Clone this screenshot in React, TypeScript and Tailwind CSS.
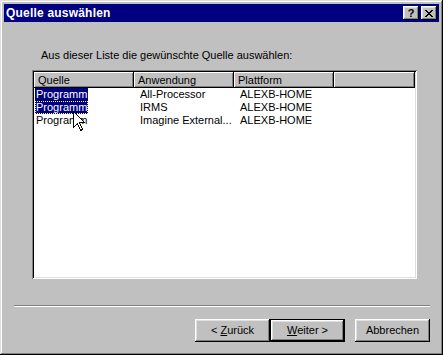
import React from "react";

const raised =
  "shadow-[inset_-1px_-1px_#000,inset_1px_1px_#fff,inset_-2px_-2px_#808080,inset_2px_2px_#dfdfdf]";

function Btn({ children, def }: { children: React.ReactNode; def?: boolean }) {
  if (def) {
    return (
      <div className="w-[75px] h-[23px] border border-black">
        <div className={`w-full h-full flex items-center justify-center ${raised}`}>{children}</div>
      </div>
    );
  }
  return (
    <div className={`w-[75px] h-[23px] flex items-center justify-center ${raised}`}>{children}</div>
  );
}

function HeaderCell({ w, children }: { w: string; children?: React.ReactNode }) {
  return (
    <div
      className={`${w} h-full flex items-center pl-[4px] shadow-[inset_-1px_-1px_#000,inset_1px_1px_#fff,inset_-2px_-2px_#808080]`}
    >
      {children}
    </div>
  );
}

const rows = [
  { app: "All-Processor", sel: true, focus: false },
  { app: "IRMS", sel: true, focus: true },
  { app: "Imagine External...", sel: false, focus: false },
];

export default function App() {
  return (
    <div
      className={`relative w-[443px] h-[355px] bg-[#c0c0c0] p-[4px] flex flex-col font-['Liberation_Sans',Arial,sans-serif] text-[11px] leading-[13px] text-black shadow-[inset_-1px_-1px_#000,inset_1px_1px_#dfdfdf,inset_-2px_-2px_#808080,inset_2px_2px_#fff]`}
    >
      <div className="h-[18px] bg-[#000080] flex items-center pl-[2px] pr-[2px]">
        <div className="text-white font-bold text-[12px] tracking-[0.2px] flex-1">Quelle auswählen</div>
        <div className={`w-[16px] h-[14px] bg-[#c0c0c0] flex items-center justify-center font-bold text-[11px] ${raised}`}>?</div>
        <div className={`w-[16px] h-[14px] ml-[2px] bg-[#c0c0c0] flex items-center justify-center ${raised}`}>
          <svg width="8" height="7" viewBox="0 0 8 7" shapeRendering="crispEdges">
            <path d="M0 0h2v1h-2zM6 0h2v1h-2zM1 1h2v1h-2zM5 1h2v1h-2zM2 2h4v1h-4zM3 3h2v1h-2zM2 4h4v1h-4zM1 5h2v1h-2zM5 5h2v1h-2zM0 6h2v1h-2zM6 6h2v1h-2z" fill="#000" />
          </svg>
        </div>
      </div>

      <div className="ml-[37px] mt-[27px]">Aus dieser Liste die gewünschte Quelle auswählen:</div>

      <div className="ml-[28px] mt-[8px] w-[385px] h-[209px] bg-white p-[2px] shadow-[inset_1px_1px_#808080,inset_-1px_-1px_#fff,inset_2px_2px_#000,inset_-2px_-2px_#dfdfdf] flex flex-col">
        <div className="h-[16px] flex bg-[#c0c0c0]">
          <HeaderCell w="w-[100px]">Quelle</HeaderCell>
          <HeaderCell w="w-[100px]">Anwendung</HeaderCell>
          <HeaderCell w="w-[100px]">Plattform</HeaderCell>
          <HeaderCell w="flex-1" />
        </div>
        <div className="flex flex-col">
          {rows.map((r, i) => (
            <div key={i} className="h-[13px] flex items-center">
              <div className="w-[100px] pl-[1px] flex">
                <span
                  className={`h-[13px] px-[1px] flex items-center ${
                    r.sel ? "bg-[#000080] text-white" : ""
                  } ${r.focus ? "outline outline-1 outline-dotted outline-offset-[-1px] outline-[#ffff80]" : ""}`}
                >
                  Programm
                </span>
              </div>
              <div className="w-[100px] pl-[6px] whitespace-nowrap">{r.app}</div>
              <div className="w-[100px] pl-[6px]">ALEXB-HOME</div>
            </div>
          ))}
        </div>
      </div>

      <div className="ml-[10px] mt-[26px] w-[416px] h-[2px] border-t border-t-[#808080] border-b border-b-white" />

      <div className="mt-[12px] flex pl-[191px]">
        <Btn>
          <span>
            &lt; <span className="underline">Z</span>urück
          </span>
        </Btn>
        <Btn def>
          <span>
            <span className="underline">W</span>eiter &gt;
          </span>
        </Btn>
        <div className="ml-[10px]">
          <Btn>Abbrechen</Btn>
        </div>
      </div>

      <svg
        className="absolute left-[73px] top-[111px]"
        width="12"
        height="20"
        viewBox="0 0 12 20"
        shapeRendering="crispEdges"
      >
        <path
          d="M0.5 0.5 L0.5 16.5 L4.5 12.5 L7.5 19.5 L9.5 18.5 L6.5 11.5 L11.5 11.5 Z"
          fill="#fff"
          stroke="#000"
          strokeWidth="1"
        />
      </svg>
    </div>
  );
}
